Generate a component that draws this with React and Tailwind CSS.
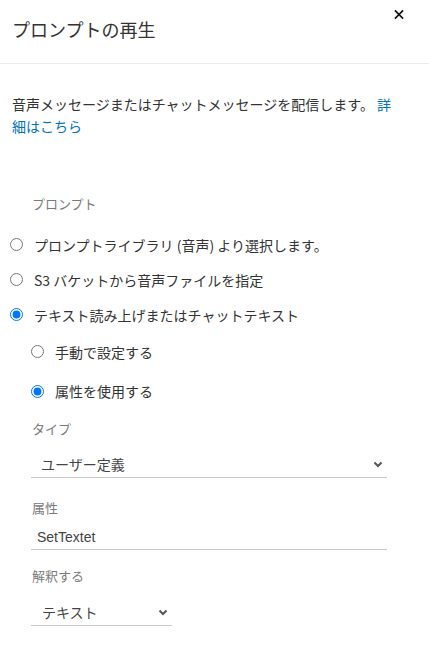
import React, { useState } from 'react';

const FONT = { fontFamily: '"Noto Sans CJK JP", "Noto Sans", sans-serif' };

function Chevron() {
  return (
    <svg width="10" height="7" viewBox="0 0 10 7" className="shrink-0">
      <path d="M1.5 1.5 L5 5 L8.5 1.5" fill="none" stroke="#555" strokeWidth="2" />
    </svg>
  );
}

function Radio({ checked, onChange, label, className }) {
  return (
    <label className={`flex items-center cursor-pointer ${className}`}>
      <input
        type="radio"
        checked={checked}
        onChange={onChange}
        className="m-0 w-[13px] h-[13px] accent-[#0075ff] shrink-0"
      />
      <span className="ml-[11px] text-[14px] leading-[20px] text-[#333]">{label}</span>
    </label>
  );
}

export default function App() {
  const [source, setSource] = useState('tts');
  const [mode, setMode] = useState('attr');

  return (
    <div className="w-[429px] h-[650px] bg-white overflow-hidden" style={FONT}>
      {/* header */}
      <div className="h-[64px] border-b border-[#eaeded] flex justify-between pl-3 pr-[25px]">
        <h2 className="pt-[18px] text-[18px] leading-[22px] text-[#333] font-normal">プロンプトの再生</h2>
        <button className="mt-[9px] w-[10px] h-[10px] flex items-center justify-center">
          <svg width="11" height="11" viewBox="0 0 11 11">
            <path d="M1 1 L10 10 M10 1 L1 10" stroke="#111" strokeWidth="1.8" />
          </svg>
        </button>
      </div>

      <p className="pt-[29px] pl-3 w-[398px] text-[14px] leading-[22px] text-[#333]">
        音声メッセージまたはチャットメッセージを配信します。 <a href="#" className="text-[#0073bb]">詳細はこちら</a>
      </p>

      <div className="mt-[57px] pl-8 text-[13px] leading-[20px] text-[#7a7a7a]">プロンプト</div>

      <div className="mt-[13px] pl-[10px]">
        <Radio className="h-[35px]" checked={source === 'lib'} onChange={() => setSource('lib')} label="プロンプトライブラリ (音声) より選択します。" />
        <Radio className="h-[35px]" checked={source === 's3'} onChange={() => setSource('s3')} label="S3 バケットから音声ファイルを指定" />
        <Radio className="h-[35px]" checked={source === 'tts'} onChange={() => setSource('tts')} label="テキスト読み上げまたはチャットテキスト" />
      </div>

      <div className="pl-[31px]">
        <Radio className="h-[39px]" checked={mode === 'manual'} onChange={() => setMode('manual')} label="手動で設定する" />
        <Radio className="h-[40px]" checked={mode === 'attr'} onChange={() => setMode('attr')} label="属性を使用する" />
      </div>

      <div className="pl-[31px] w-[387px]">
        <div className="mt-[8px] pl-[1px] text-[13px] leading-[20px] text-[#7a7a7a]">タイプ</div>
        <div className="mt-[12px] h-[27px] border-b border-[#c8c8c8] flex items-center justify-between pl-[10px] pr-[4px]">
          <span className="text-[14px] leading-[20px] text-[#444]">ユーザー定義</span>
          <Chevron />
        </div>

        <div className="mt-[20px] pl-[1px] text-[13px] leading-[20px] text-[#7a7a7a]">属性</div>
        <div className="mt-[7px] h-[25px] border-b border-[#c8c8c8] flex items-center pl-[6px]">
          <span className="text-[14px] leading-[20px] text-[#444]" style={{ fontFamily: '"Liberation Sans", Arial, sans-serif' }}>SetTextet</span>
        </div>

        <div className="mt-[16px] pl-[1px] text-[13px] leading-[20px] text-[#7a7a7a]">解釈する</div>
        <div className="mt-[13px] w-[141px] h-[27px] border-b border-[#c8c8c8] flex items-center justify-between pl-[11px] pr-[4px]">
          <span className="text-[14px] leading-[20px] text-[#444]">テキスト</span>
          <Chevron />
        </div>
      </div>
    </div>
  );
}
